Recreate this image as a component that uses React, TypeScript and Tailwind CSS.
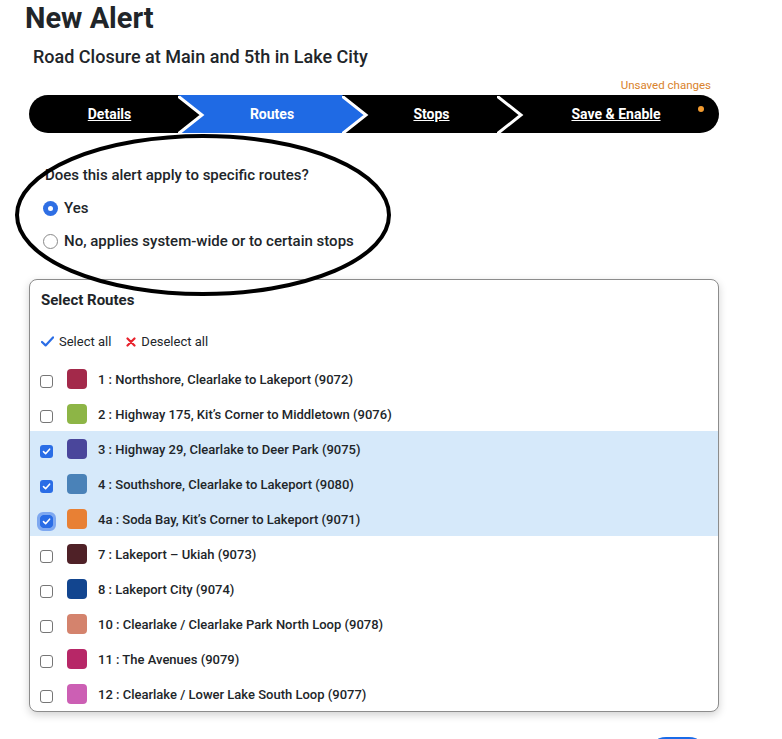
import React from "react";

type Route = { label: string; color: string; checked?: boolean; focused?: boolean };

const routes: Route[] = [
  { label: "1 : Northshore, Clearlake to Lakeport (9072)", color: "bg-[#a3294a]" },
  { label: "2 : Highway 175, Kit’s Corner to Middletown (9076)", color: "bg-[#8db546]" },
  { label: "3 : Highway 29, Clearlake to Deer Park (9075)", color: "bg-[#4a469b]", checked: true },
  { label: "4 : Southshore, Clearlake to Lakeport (9080)", color: "bg-[#4a82b8]", checked: true },
  { label: "4a : Soda Bay, Kit’s Corner to Lakeport (9071)", color: "bg-[#e88034]", checked: true, focused: true },
  { label: "7 : Lakeport – Ukiah (9073)", color: "bg-[#4f2127]" },
  { label: "8 : Lakeport City (9074)", color: "bg-[#12458f]" },
  { label: "10 : Clearlake / Clearlake Park North Loop (9078)", color: "bg-[#d4836d]" },
  { label: "11 : The Avenues (9079)", color: "bg-[#b72767]" },
  { label: "12 : Clearlake / Lower Lake South Loop (9077)", color: "bg-[#cc5fb4]" },
];

function Chevron() {
  return (
    <svg className="absolute left-0 top-0 z-20" width="27" height="38" viewBox="0 0 27 38">
      <path d="M0 0 L24 19 L0 38" fill="none" stroke="white" strokeWidth="3" />
    </svg>
  );
}

function Stepper() {
  return (
    <div className="ml-[29px] mt-[3px] flex h-[38px] w-[690px] overflow-hidden rounded-full bg-black pt-[1px] text-[14px] font-bold text-white">
      <div className="flex w-[149px] items-center justify-center pl-[12px]">
        <span className="underline">Details</span>
      </div>
      <div className="relative flex w-[164px] items-center justify-center pl-[24px]">
        <div className="absolute -top-[1px] bottom-0 left-0 -right-[24px] z-10 bg-[#1f6ae4] [clip-path:polygon(0_0,calc(100%-24px)_0,100%_50%,calc(100%-24px)_100%,0_100%,24px_50%)]" />
        <Chevron />
        <span className="relative z-20">Routes</span>
      </div>
      <div className="relative flex w-[155px] items-center justify-center pl-[24px]">
        <Chevron />
        <span className="underline">Stops</span>
      </div>
      <div className="relative flex w-[222px] items-center justify-center pl-[24px] pr-[8px]">
        <Chevron />
        <span className="underline">Save &amp; Enable</span>
        <span className="absolute right-[15px] top-[10px] h-[6px] w-[6px] rounded-full bg-[#f29b30]" />
      </div>
    </div>
  );
}

function Radio({ checked, label }: { checked?: boolean; label: string }) {
  return (
    <div className="flex h-[33px] items-center pl-[43px] pt-[1px]">
      {checked ? (
        <span className="flex h-[15px] w-[15px] items-center justify-center rounded-full bg-[#2f6fe4]">
          <span className="h-[5px] w-[5px] rounded-full bg-white" />
        </span>
      ) : (
        <span className="h-[15px] w-[15px] rounded-full border border-[#8a8a8a] bg-white" />
      )}
      <span className="ml-[6px] text-[15px] font-medium text-[#212529]">{label}</span>
    </div>
  );
}

function Checkbox({ checked, focused }: { checked?: boolean; focused?: boolean }) {
  if (checked) {
    return (
      <span
        className={
          "flex h-[13px] w-[13px] translate-y-[3px] items-center justify-center rounded-[3px] bg-[#2a6de6] " +
          (focused ? "outline outline-[3px] outline-[#7ea8f0]" : "")
        }
      >
        <svg width="9" height="9" viewBox="0 0 9 9">
          <path d="M1.5 4.6 L3.6 6.7 L7.6 2.2" fill="none" stroke="white" strokeWidth="1.6" strokeLinecap="round" strokeLinejoin="round" />
        </svg>
      </span>
    );
  }
  return <span className="h-[13px] w-[13px] translate-y-[3px] rounded-[3px] border border-[#767676] bg-white" />;
}

export default function App() {
  return (
    <div className="relative h-[739px] w-[782px] overflow-hidden bg-white font-['Roboto',sans-serif] text-[#212529]">
      <h1 className="mt-[1px] pl-[25px] text-[29px] font-bold leading-[34px]">New Alert</h1>
      <h2 className="mt-[10px] pl-[33px] text-[18px] font-medium leading-[24px]">
        Road Closure at Main and 5th in Lake City
      </h2>
      <div className="mt-[10px] pr-[71px] text-right text-[11.5px] leading-[13px] text-[#d9822b]">Unsaved changes</div>
      <Stepper />

      <p className="mt-[32px] pl-[45px] text-[15px] font-medium leading-[20px]">Does this alert apply to specific routes?</p>
      <div className="mt-[6px]">
        <Radio checked label="Yes" />
        <Radio label="No, applies system-wide or to certain stops" />
      </div>

      <div className="ml-[29px] mt-[22px] w-[690px] overflow-hidden rounded-[8px] border border-[#8c8c8c] bg-white shadow-[0_3px_8px_rgba(0,0,0,0.18)]">
        <div className="pl-[11px] pt-[10px] text-[15px] font-bold leading-[20px]">Select Routes</div>
        <div className="mb-[10px] mt-[21px] flex h-[20px] items-center pl-[11px] pt-[1px] text-[13px]">
          <svg width="13" height="11" viewBox="0 0 13 11">
            <path d="M1 6 L4.6 9.4 L12 1.4" fill="none" stroke="#2a6de6" strokeWidth="2.2" strokeLinecap="round" strokeLinejoin="round" />
          </svg>
          <span className="ml-[5px]">Select all</span>
          <svg className="ml-[15px]" width="10" height="10" viewBox="0 0 10 10">
            <path d="M1.5 1.5 L8.5 8.5 M8.5 1.5 L1.5 8.5" stroke="#e8222c" strokeWidth="2.2" strokeLinecap="round" />
          </svg>
          <span className="ml-[5px]">Deselect all</span>
        </div>
        {routes.map((r) => (
          <div key={r.label} className={"flex h-[35px] items-center pl-[10px] " + (r.checked ? "bg-[#d6e9fa]" : "")}>
            <Checkbox checked={r.checked} focused={r.focused} />
            <span className={"ml-[14px] h-[20px] w-[20px] rounded-[4px] " + r.color} />
            <span className="ml-[11px] translate-y-[1px] text-[13px] font-medium">{r.label}</span>
          </div>
        ))}
      </div>

      <div className="mt-[25px] flex justify-end pr-[75px]">
        <div className="h-[36px] w-[59px] rounded-full bg-[#1a6be8]" />
      </div>

      <svg className="pointer-events-none absolute left-[13px] top-[132px]" width="380" height="166" viewBox="0 0 380 166">
        <ellipse cx="190" cy="83" rx="186" ry="79" fill="none" stroke="black" strokeWidth="4" />
      </svg>
    </div>
  );
}
